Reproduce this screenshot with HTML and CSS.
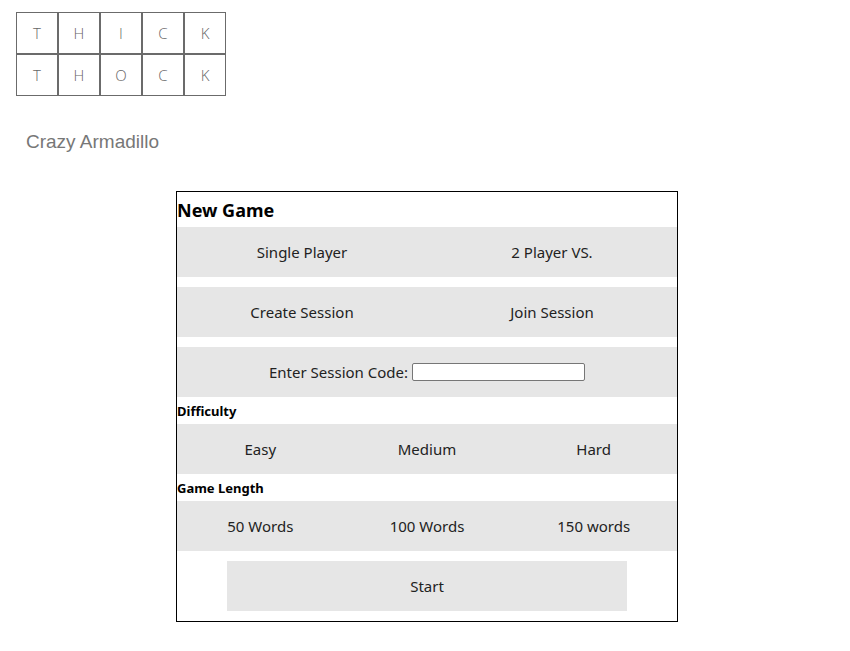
FILE: index.html
```html
<!DOCTYPE html>
<html>
<head>
<meta charset="utf-8">
<link rel="stylesheet" href="styles.css">
</head>
<body>
<div class="board">
  <div class="tile">T</div><div class="tile">H</div><div class="tile">I</div><div class="tile">C</div><div class="tile">K</div>
  <div class="tile">T</div><div class="tile">H</div><div class="tile">O</div><div class="tile">C</div><div class="tile">K</div>
</div>
<div class="brand">Crazy Armadillo</div>
<div class="panel">
  <h3 class="title">New Game</h3>
  <div class="row two">
    <div class="opt">Single Player</div>
    <div class="opt">2 Player VS.</div>
  </div>
  <div class="row two">
    <div class="opt">Create Session</div>
    <div class="opt">Join Session</div>
  </div>
  <div class="row code">
    <label class="code-label">Enter Session Code: <input class="code-input" type="text"></label>
  </div>
  <div class="section">Difficulty</div>
  <div class="row three">
    <div class="opt">Easy</div>
    <div class="opt">Medium</div>
    <div class="opt">Hard</div>
  </div>
  <div class="section">Game Length</div>
  <div class="row three">
    <div class="opt">50 Words</div>
    <div class="opt">100 Words</div>
    <div class="opt">150 words</div>
  </div>
  <div class="start-wrap">
    <div class="start">Start</div>
  </div>
</div>
</body>
</html>
```
FILE: styles.css
```css
html, body {
  margin: 0;
  padding: 0;
  background: #fff;
}
body {
  font-family: "Noto Sans", "Open Sans", sans-serif;
}
.board {
  display: grid;
  grid-template-columns: repeat(5, 42px);
  grid-auto-rows: 42px;
  padding: 12px 0 0 16px;
}
.tile {
  box-sizing: border-box;
  border: 1px solid #6b6b6b;
  display: flex;
  align-items: center;
  justify-content: center;
  font-family: "Open Sans", sans-serif;
  font-weight: 300;
  font-size: 15px;
  color: #666;
}
.brand {
  font-family: "Liberation Sans", Arial, sans-serif;
  font-size: 19px;
  color: #777;
  margin: 35px 0 0 26px;
  line-height: 22px;
}
.panel {
  width: 500px;
  border: 1px solid #000;
  margin: 38px 0 0 176px;
  padding-bottom: 10px;
}
.title {
  margin: 0;
  font-size: 18px;
  font-weight: 700;
  height: 35px;
  line-height: 37px;
  color: #000;
}
.row {
  background: #e6e6e6;
  height: 50px;
  display: grid;
  align-items: center;
  font-size: 15px;
  color: #222;
}
.row + .row {
  margin-top: 10px;
}
.two {
  grid-template-columns: 1fr 1fr;
}
.three {
  grid-template-columns: 1fr 1fr 1fr;
}
.opt {
  text-align: center;
}
.code {
  display: flex;
  justify-content: center;
}
.code-label {
  display: flex;
  align-items: center;
  gap: 4px;
}
.code-input {
  width: 167px;
  height: 14px;
  border: 1px solid #767676;
  border-radius: 2px;
  padding: 1px 2px;
  margin: 0;
  font-size: 13px;
}
.section {
  font-size: 13px;
  font-weight: 700;
  height: 27px;
  line-height: 28px;
  color: #000;
}
.start-wrap {
  display: flex;
  justify-content: center;
  margin-top: 10px;
}
.start {
  width: 400px;
  height: 50px;
  background: #e6e6e6;
  display: flex;
  align-items: center;
  justify-content: center;
  font-size: 15px;
  color: #222;
}
```
